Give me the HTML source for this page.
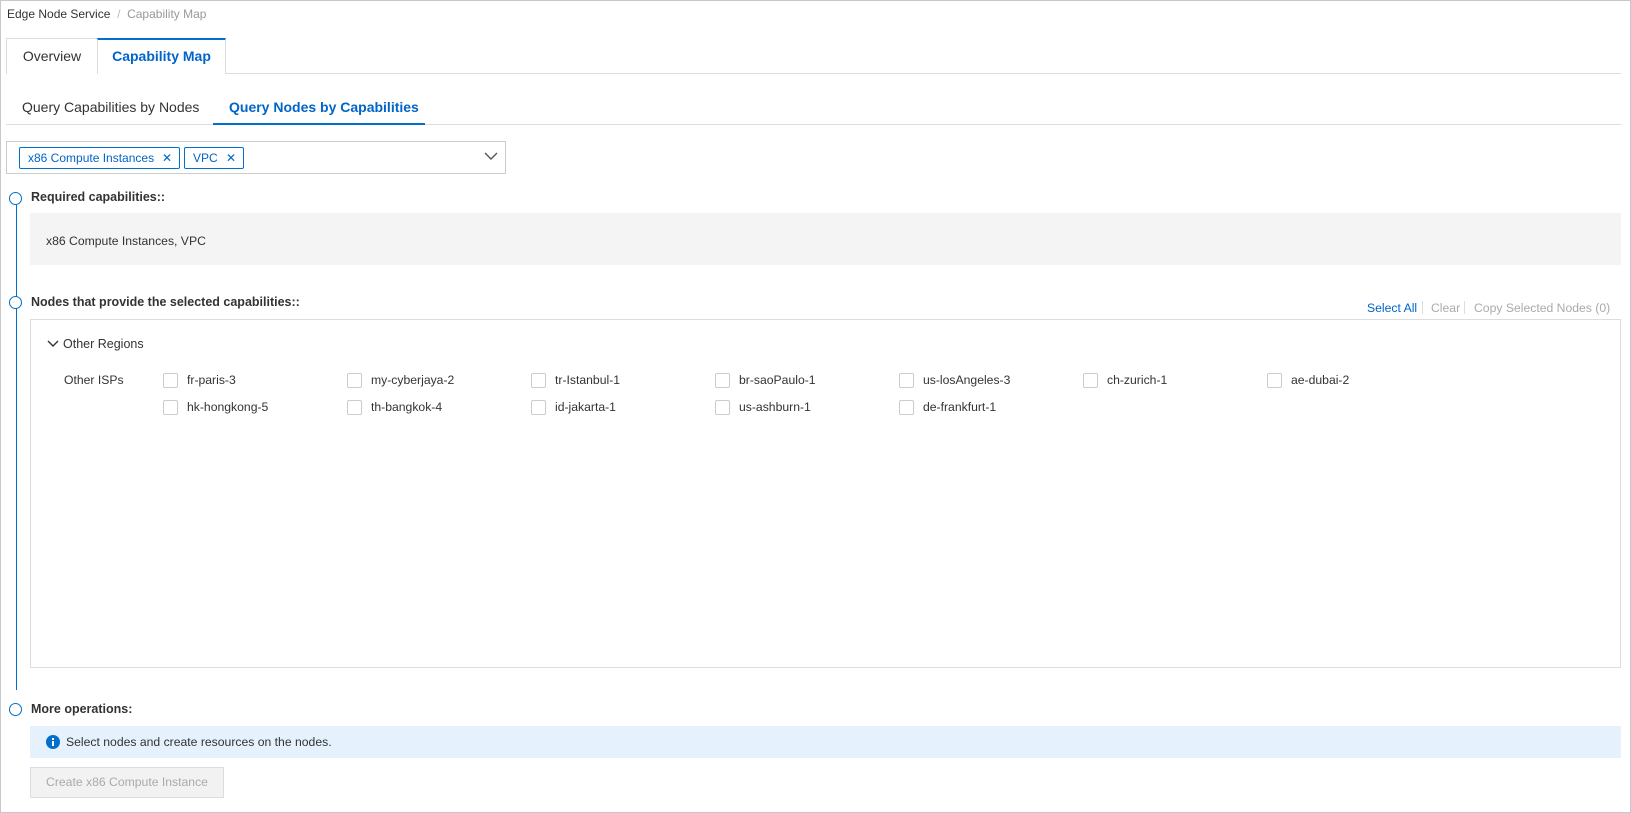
<!DOCTYPE html>
<html><head><meta charset="utf-8"><style>
*{box-sizing:border-box;margin:0;padding:0}
body{width:1631px;height:813px;overflow:hidden;background:#fff;font-family:"Liberation Sans",sans-serif;color:#333;font-size:13px;position:relative}
.frame{position:absolute;left:0;top:0;width:1631px;height:813px;border:1px solid #c8c8c8}
.abs{position:absolute;white-space:nowrap}
.cb{position:absolute;width:15px;height:15px;border:1px solid #ccc;border-radius:2px;background:#fff}
.lbl{position:absolute;font-size:12.2px;color:#333;white-space:nowrap;top:0}
.circ{position:absolute;width:13px;height:13px;border:1.5px solid #0070cc;border-radius:50%;background:#fff}
.h{position:absolute;font-weight:bold;font-size:12.5px;color:#333}
</style></head><body>
<div class="frame"></div>
<div class="abs" style="left:7px;top:7px;font-size:12px;color:#333">Edge Node Service <span style="color:#bbb">&nbsp;/&nbsp;</span> <span style="color:#999">Capability Map</span></div>
<div class="abs" style="left:6px;top:38px;width:92px;height:36px;border:1px solid #ddd;border-bottom:none;background:#fff;font-size:14px;line-height:34px;text-align:center">Overview</div>
<div class="abs" style="left:97px;top:38px;width:129px;height:36px;border:1px solid #ddd;border-top:2px solid #0070cc;border-bottom:none;background:#fff;font-size:14px;line-height:33px;text-align:center;color:#0064c8;font-weight:bold">Capability Map</div>
<div class="abs" style="left:226px;top:73px;width:1395px;height:1px;background:#ddd"></div>
<div class="abs" style="left:22px;top:99px;font-size:14px">Query Capabilities by Nodes</div>
<div class="abs" style="left:229px;top:99px;font-size:14px;color:#0064c8;font-weight:bold">Query Nodes by Capabilities</div>
<div class="abs" style="left:6px;top:124px;width:1615px;height:1px;background:#ddd"></div>
<div class="abs" style="left:213px;top:123px;width:212px;height:2px;background:#0070cc"></div>
<div class="abs" style="left:6px;top:141px;width:500px;height:33px;border:1px solid #ccc"></div>
<div class="abs" style="left:19px;top:147px;width:161px;height:22px;border:1px solid #0070cc;border-radius:2px;color:#0064c8;font-size:12px;line-height:20px;padding-left:8px">x86 Compute Instances<span style="position:absolute;right:7px;font-size:12px">✕</span></div>
<div class="abs" style="left:184px;top:147px;width:60px;height:22px;border:1px solid #0070cc;border-radius:2px;color:#0064c8;font-size:12px;line-height:20px;padding-left:8px">VPC<span style="position:absolute;right:7px;font-size:12px">✕</span></div>
<svg class="abs" style="left:484px;top:151px" width="14" height="10"><path d="M1 2 L7 8 L13 2" fill="none" stroke="#555" stroke-width="1.4"/></svg>
<div class="abs" style="left:15.5px;top:205px;width:1.5px;height:485px;background:#0070cc"></div>
<div class="circ" style="left:9px;top:192px"></div>
<div class="h" style="left:31px;top:190px">Required capabilities::</div>
<div class="abs" style="left:30px;top:213px;width:1591px;height:52px;background:#f4f4f4;padding:21px 0 0 16px;font-size:12.2px">x86 Compute Instances, VPC</div>
<div class="circ" style="left:9px;top:296px"></div>
<div class="h" style="left:31px;top:295px">Nodes that provide the selected capabilities::</div>
<div class="abs" style="left:1367px;top:301px;font-size:12.2px;color:#0064c8">Select All</div>
<div class="abs" style="left:1422px;top:301px;width:1px;height:13px;background:#ddd"></div>
<div class="abs" style="left:1431px;top:301px;font-size:12.2px;color:#aaa">Clear</div>
<div class="abs" style="left:1464px;top:301px;width:1px;height:13px;background:#ddd"></div>
<div class="abs" style="left:1474px;top:301px;font-size:12.2px;color:#aaa">Copy Selected Nodes (0)</div>
<div class="abs" style="left:30px;top:319px;width:1591px;height:349px;border:1px solid #ddd"></div>
<svg class="abs" style="left:47px;top:340px" width="12" height="8"><path d="M1 1 L6 6 L11 1" fill="none" stroke="#333" stroke-width="1.4"/></svg>
<div class="abs" style="left:63px;top:337px;font-size:12.5px">Other Regions</div>
<div class="abs" style="left:64px;top:373px;font-size:12.2px">Other ISPs</div>

<div style="position:absolute;left:0;top:373px">
<div class="cb" style="left:163px"></div><div class="lbl" style="left:187px">fr-paris-3</div>
<div class="cb" style="left:347px"></div><div class="lbl" style="left:371px">my-cyberjaya-2</div>
<div class="cb" style="left:531px"></div><div class="lbl" style="left:555px">tr-Istanbul-1</div>
<div class="cb" style="left:715px"></div><div class="lbl" style="left:739px">br-saoPaulo-1</div>
<div class="cb" style="left:899px"></div><div class="lbl" style="left:923px">us-losAngeles-3</div>
<div class="cb" style="left:1083px"></div><div class="lbl" style="left:1107px">ch-zurich-1</div>
<div class="cb" style="left:1267px"></div><div class="lbl" style="left:1291px">ae-dubai-2</div>
</div>
<div style="position:absolute;left:0;top:400px">
<div class="cb" style="left:163px"></div><div class="lbl" style="left:187px">hk-hongkong-5</div>
<div class="cb" style="left:347px"></div><div class="lbl" style="left:371px">th-bangkok-4</div>
<div class="cb" style="left:531px"></div><div class="lbl" style="left:555px">id-jakarta-1</div>
<div class="cb" style="left:715px"></div><div class="lbl" style="left:739px">us-ashburn-1</div>
<div class="cb" style="left:899px"></div><div class="lbl" style="left:923px">de-frankfurt-1</div>
</div>

<div class="circ" style="left:9px;top:703px"></div>
<div class="h" style="left:31px;top:702px">More operations:</div>
<div class="abs" style="left:30px;top:726px;width:1591px;height:32px;background:#e5f2fd"></div>
<svg class="abs" style="left:46px;top:735px" width="14" height="14"><circle cx="7" cy="7" r="7" fill="#0070cc"/><rect x="6" y="6" width="2" height="5" fill="#fff"/><rect x="6" y="3" width="2" height="2" fill="#fff"/></svg>
<div class="abs" style="left:66px;top:735px;font-size:12.2px">Select nodes and create resources on the nodes.</div>
<div class="abs" style="left:30px;top:767px;width:194px;height:31px;border:1px solid #ddd;background:#f2f2f2;color:#aaa;font-size:12.2px;line-height:29px;text-align:center">Create x86 Compute Instance</div>
</body></html>
